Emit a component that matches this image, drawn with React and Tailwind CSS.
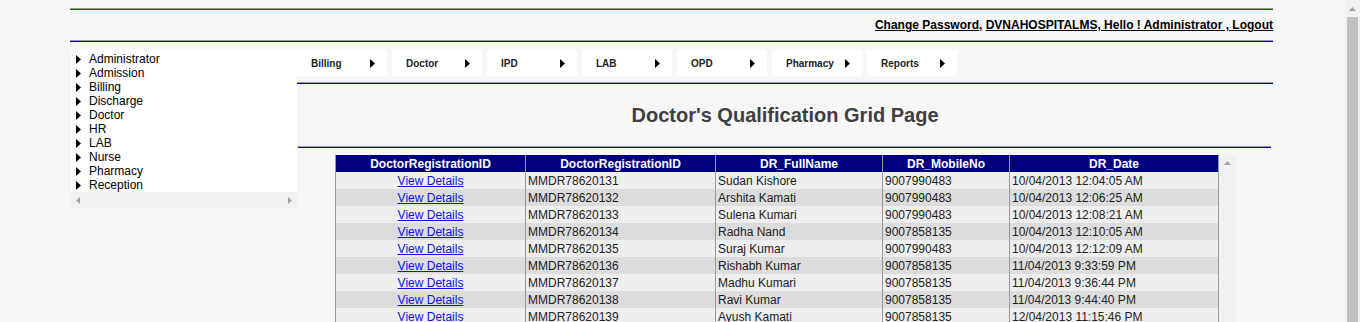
import React from "react";

const treeItems = [
  "Administrator",
  "Admission",
  "Billing",
  "Discharge",
  "Doctor",
  "HR",
  "LAB",
  "Nurse",
  "Pharmacy",
  "Reception",
];

const menuItems = ["Billing", "Doctor", "IPD", "LAB", "OPD", "Pharmacy", "Reports"];

const rows = [
  ["MMDR78620131", "Sudan Kishore", "9007990483", "10/04/2013 12:04:05 AM"],
  ["MMDR78620132", "Arshita Kamati", "9007990483", "10/04/2013 12:06:25 AM"],
  ["MMDR78620133", "Sulena Kumari", "9007990483", "10/04/2013 12:08:21 AM"],
  ["MMDR78620134", "Radha Nand", "9007858135", "10/04/2013 12:10:05 AM"],
  ["MMDR78620135", "Suraj Kumar", "9007990483", "10/04/2013 12:12:09 AM"],
  ["MMDR78620136", "Rishabh Kumar", "9007858135", "11/04/2013 9:33:59 PM"],
  ["MMDR78620137", "Madhu Kumari", "9007858135", "11/04/2013 9:36:44 PM"],
  ["MMDR78620138", "Ravi Kumar", "9007858135", "11/04/2013 9:44:40 PM"],
  ["MMDR78620139", "Ayush Kamati", "9007858135", "12/04/2013 11:15:46 PM"],
];

const Arrow = ({ className = "" }) => (
  <svg width="5" height="9" viewBox="0 0 5 9" className={className}>
    <path d="M0 0 L5 4.5 L0 9 Z" fill="#000" />
  </svg>
);

const DoubleLine = ({ bottom = "bg-[#0000a8]", className = "" }) => (
  <div className={className}>
    <div className="h-px bg-[#9a9a9a]" />
    <div className={`h-px ${bottom}`} />
  </div>
);

const App = () => {
  return (
    <div
      className="flex h-[322px] w-[1360px] overflow-hidden bg-[#f7f7f7] text-black"
      style={{ fontFamily: '"Liberation Sans", Arial, sans-serif' }}
    >
      <div className="flex-1 overflow-hidden">
        <div className="ml-[70px] w-[1203px] pt-[8px]">
          <DoubleLine bottom="bg-[#006400]" />

          <div className="flex h-[30px] items-center justify-end text-[12px] font-bold">
            <span>
              <a className="underline">Change Password</a>,{" "}
              <a className="underline">DVNAHOSPITALMS, Hello ! Administrator , Logout</a>
            </span>
          </div>

          <DoubleLine />

          <div className="mt-[8px] flex items-start">
            <div className="ml-px w-[226px] shrink-0 bg-white">
              <ul className="pt-[2px] text-[12px] leading-[14px]">
                {treeItems.map((item) => (
                  <li key={item} className="flex items-center">
                    <Arrow className="ml-[5px] mr-[8px]" />
                    <span>{item}</span>
                  </li>
                ))}
              </ul>
              <div className="flex h-[16px] items-center justify-between bg-[#f0f0f0] px-[5px]">
                <svg width="4" height="7" viewBox="0 0 4 7">
                  <path d="M4 0 L0 3.5 L4 7 Z" fill="#a3a3a3" />
                </svg>
                <svg width="4" height="7" viewBox="0 0 4 7">
                  <path d="M0 0 L4 3.5 L0 7 Z" fill="#a3a3a3" />
                </svg>
              </div>
            </div>

            <div className="flex-1">
              <div className="flex gap-[5px]">
                {menuItems.map((item) => (
                  <div
                    key={item}
                    className="flex h-[26px] w-[90px] items-center justify-between bg-white pl-[14px] pr-[12px] text-[10px] font-bold text-[#222]"
                  >
                    <span>{item}</span>
                    <Arrow />
                  </div>
                ))}
              </div>

              <DoubleLine className="mt-[6px]" />

              <div className="flex h-[62px] items-center justify-center">
                <h1 className="text-[20px] font-bold text-[#3f3f3f]">
                  Doctor's Qualification Grid Page
                </h1>
              </div>

              <DoubleLine className="ml-px mr-[2px]" />

              <div className="ml-[38px] mt-[7px] flex">
                <table className="w-[883px] table-fixed border-collapse text-[12px] leading-[16px]">
                  <colgroup>
                    <col className="w-[190px]" />
                    <col className="w-[190px]" />
                    <col className="w-[167px]" />
                    <col className="w-[127px]" />
                    <col className="w-[209px]" />
                  </colgroup>
                  <thead>
                    <tr className="h-[17px] bg-[#000080] font-bold text-white">
                      <th className="border-x border-[#999]">DoctorRegistrationID</th>
                      <th className="border-x border-[#999]">DoctorRegistrationID</th>
                      <th className="border-x border-[#999]">DR_FullName</th>
                      <th className="border-x border-[#999]">DR_MobileNo</th>
                      <th className="border-x border-[#999]">DR_Date</th>
                    </tr>
                  </thead>
                  <tbody className="text-[#222]">
                    {rows.map((r, i) => (
                      <tr
                        key={r[0]}
                        className={`h-[17px] ${i % 2 === 0 ? "bg-[#eeeeee]" : "bg-[#dcdcdc]"}`}
                      >
                        <td className="border-x border-[#999] text-center">
                          <a className="text-[#1010ee] underline">View Details</a>
                        </td>
                        <td className="border-x border-[#999] pl-[2px]">{r[0]}</td>
                        <td className="border-x border-[#999] pl-[2px]">{r[1]}</td>
                        <td className="border-x border-[#999] pl-[2px]">{r[2]}</td>
                        <td className="border-x border-[#999] pl-[2px]">{r[3]}</td>
                      </tr>
                    ))}
                  </tbody>
                </table>
                <div className="flex w-[17px] shrink-0 justify-center bg-[#f1f1f1] pt-[6px]">
                  <svg width="7" height="4" viewBox="0 0 7 4">
                    <path d="M0 4 L3.5 0 L7 4 Z" fill="#a3a3a3" />
                  </svg>
                </div>
              </div>
            </div>
          </div>
        </div>
      </div>

      <div className="flex w-[15px] shrink-0 flex-col items-center bg-[#f1f1f1]">
        <div className="flex h-[17px] items-center">
          <svg width="7" height="4" viewBox="0 0 7 4">
            <path d="M0 4 L3.5 0 L7 4 Z" fill="#a3a3a3" />
          </svg>
        </div>
        <div className="w-[11px] flex-1 bg-[#c1c1c1]" />
      </div>
    </div>
  );
};

export default App;
